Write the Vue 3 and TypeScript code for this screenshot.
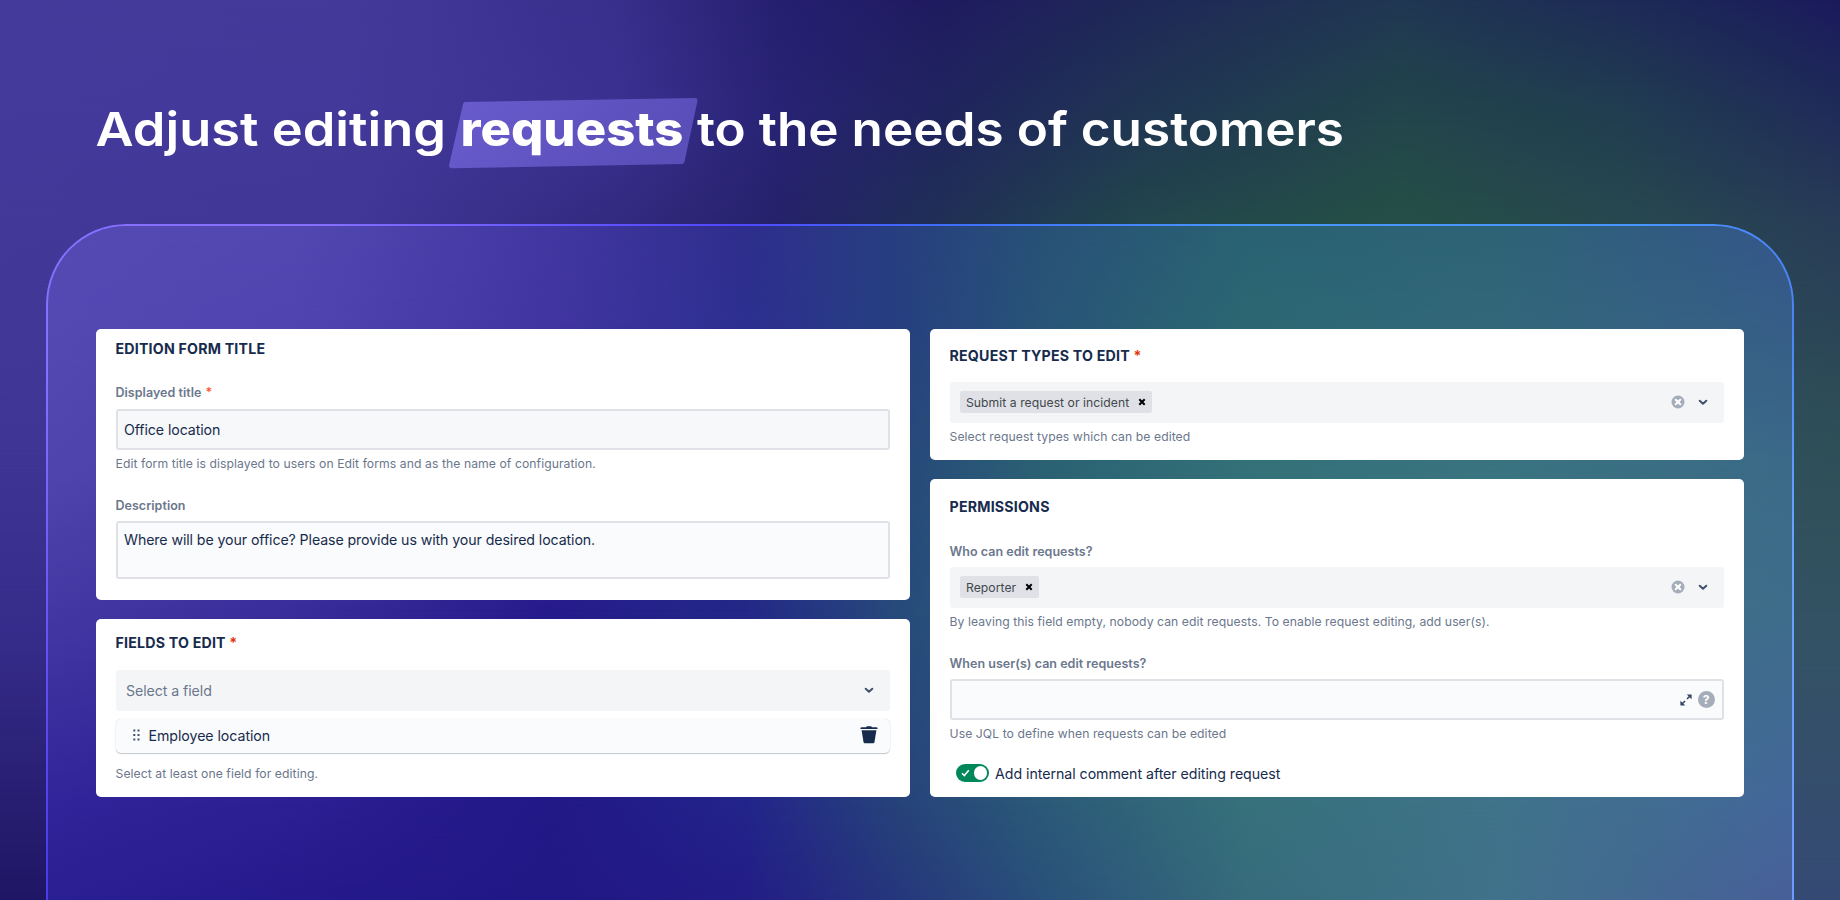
<template>
  <main class="promo">
    <div class="mesh mesh--page">
      <div v-for="(layer, i) in pageLayers" :key="i" class="mesh__layer" :style="layer"></div>
    </div>

    <h1 class="promo__title">
      <svg class="title-art" viewBox="0 0 1300 90" width="1300" height="90">
        <defs>
          <linearGradient id="marker" x1="0" y1="0" x2="1" y2="0.25">
            <stop offset="0" stop-color="#695bcd" />
            <stop offset="1" stop-color="#5a4eb9" />
          </linearGradient>
        </defs>
        <path class="title-art__marker" d="M369.500 11.500L599 7.500L586 68.500L355.500 72.700Z" />
        <text x="-0.500" y="53" textLength="350.500" lengthAdjust="spacingAndGlyphs">Adjust editing</text>
        <text class="title-art__strong" x="364.500" y="53" textLength="223" lengthAdjust="spacingAndGlyphs">requests</text>
        <text x="601" y="53" textLength="647" lengthAdjust="spacingAndGlyphs">to the needs of customers</text>
      </svg>
    </h1>

    <section class="stage">
      <div class="mesh mesh--stage">
        <div v-for="(layer, i) in stageLayers" :key="i" class="mesh__layer" :style="layer"></div>
      </div>
      <div class="stage__border"></div>

      <div class="columns">
        <div class="column">
          <article class="card card--title">
            <h2>EDITION FORM TITLE</h2>
            <label class="label label--title">Displayed title <span class="star">*</span></label>
            <div class="input">{{ title }}</div>
            <p class="help help--title">Edit form title is displayed to users on Edit forms and as the name of configuration.</p>
            <label class="label label--desc">Description</label>
            <div class="input input--area">{{ description }}</div>
          </article>

          <article class="card card--fields">
            <h2>FIELDS TO EDIT <span class="star">*</span></h2>
            <div class="select">
              <span class="select__placeholder">Select a field</span>
              <svg class="chevron" viewBox="0 0 10 7" width="10" height="7"><path d="M1.700 1.700L5 4.800L8.300 1.700" /></svg>
            </div>
            <div class="field-row">
              <svg class="grip" viewBox="0 0 7 12" width="7" height="12">
                <template v-for="y in [0.500, 5, 9.500]" :key="y">
                  <rect x="0.300" :y="y" width="2" height="2" />
                  <rect x="4.500" :y="y" width="2" height="2" />
                </template>
              </svg>
              <span class="field-row__name">Employee location</span>
              <svg class="trash" viewBox="0 0 18 18" width="18" height="18">
                <path d="M6.200 1.300Q6.300 0.300 7.300 0.300H10.700Q11.700 0.300 11.800 1.300H16.400Q17.500 1.300 17.500 2.200V3.100H0.500V2.200Q0.500 1.300 1.600 1.300Z" />
                <path d="M1.600 4.300H16.400L14.500 16.100Q14.300 17.300 13.200 17.300H4.800Q3.700 17.300 3.500 16.100Z" />
              </svg>
            </div>
            <p class="help help--fields">Select at least one field for editing.</p>
          </article>
        </div>

        <div class="column">
          <article class="card card--types">
            <h2>REQUEST TYPES TO EDIT <span class="star">*</span></h2>
            <div class="select">
              <span class="chip">
                <span class="chip__text">Submit a request or incident</span>
                <svg class="chip__x" viewBox="0 0 8 8" width="8" height="8"><path d="M1.300 1.300L6.700 6.700M6.700 1.300L1.300 6.700" /></svg>
              </span>
              <svg class="clear" viewBox="0 0 14 14" width="14" height="14"><circle cx="7" cy="7" r="6.500" /><path d="M4.700 4.700L9.300 9.300M9.300 4.700L4.700 9.300" /></svg>
              <svg class="chevron" viewBox="0 0 10 7" width="10" height="7"><path d="M1.700 1.700L5 4.800L8.300 1.700" /></svg>
            </div>
            <p class="help help--types">Select request types which can be edited</p>
          </article>

          <article class="card card--permissions">
            <h2>PERMISSIONS</h2>
            <label class="label label--who">Who can edit requests?</label>
            <div class="select">
              <span class="chip">
                <span class="chip__text">Reporter</span>
                <svg class="chip__x" viewBox="0 0 8 8" width="8" height="8"><path d="M1.300 1.300L6.700 6.700M6.700 1.300L1.300 6.700" /></svg>
              </span>
              <svg class="clear" viewBox="0 0 14 14" width="14" height="14"><circle cx="7" cy="7" r="6.500" /><path d="M4.700 4.700L9.300 9.300M9.300 4.700L4.700 9.300" /></svg>
              <svg class="chevron" viewBox="0 0 10 7" width="10" height="7"><path d="M1.700 1.700L5 4.800L8.300 1.700" /></svg>
            </div>
            <p class="help help--who">By leaving this field empty, nobody can edit requests. To enable request editing, add user(s).</p>
            <label class="label label--when">When user(s) can edit requests?</label>
            <div class="input input--jql">
              <svg class="expand" viewBox="0 0 12 12" width="12" height="12">
                <path class="expand__line" d="M7 5L10 2M5 7L2 10" />
                <path d="M6.800 0.400H11.600V5.200ZM0.400 6.800V11.600H5.200Z" />
              </svg>
              <span class="question">?</span>
            </div>
            <p class="help help--jql">Use JQL to define when requests can be edited</p>
            <div class="switch" v-on:click="toggleComment">
              <span :class="getSwitchClass()">
                <svg viewBox="0 0 9 8" width="9" height="8"><path d="M1 4.200L3.300 6.500L7.800 1.300" /></svg>
                <span class="switch__knob"></span>
              </span>
              <span class="switch__text">Add internal comment after editing request</span>
            </div>
          </article>
        </div>
      </div>
    </section>
  </main>
</template>

<script setup lang="ts">
import { ref } from 'vue'

interface MeshRow {
  y: number;
  colors: string[];
}

const title : string = 'Office location';
const description : string = 'Where will be your office? Please provide us with your desired location.';
const internalComment = ref<boolean>(true);

const pageStops : number[] = [0, 350, 620, 780, 940, 1140, 1400, 1620, 1840];
const pageRows : MeshRow[] = [
  { y: 0, colors: ['#443b9c', '#443a9a', '#382f8b', '#252070', '#1f1b60', '#1f2857', '#203752', '#1d2b57', '#1b1a5c'] },
  { y: 110, colors: ['#443a9c', '#43399a', '#3a3190', '#282374', '#20245e', '#203553', '#22454b', '#213d50', '#1f2b59'] },
  { y: 220, colors: ['#433999', '#413796', '#322a80', '#25226a', '#202f56', '#22464c', '#254f47', '#27484f', '#283c57'] },
  { y: 450, colors: ['#3f3594', '#3f3594', '#312a7e', '#251f69', '#1f2e56', '#21434f', '#254f47', '#2e505c', '#2f5058'] },
  { y: 650, colors: ['#352b88', '#352b88', '#312a7e', '#251f69', '#1f2e56', '#21434f', '#254f47', '#345265', '#345265'] },
  { y: 900, colors: ['#1f1664', '#1f1664', '#211788', '#211788', '#264080', '#366e7a', '#366e7a', '#354a74', '#354a74'] },
];

const stageStops : number[] = [0, 250, 500, 700, 850, 1000, 1200, 1450, 1748];
const stageRows : MeshRow[] = [
  { y: 0, colors: ['#554ab3', '#5248b1', '#4238a2', '#2f2e8d', '#273f80', '#285177', '#2a6273', '#2e6376', '#35568b'] },
  { y: 100, colors: ['#5449b2', '#5045b0', '#4136a1', '#2d2f90', '#263f80', '#285577', '#2c6772', '#32677a', '#375d88'] },
  { y: 245, colors: ['#4f45ad', '#473ca8', '#302696', '#272f88', '#27487b', '#2b6273', '#347178', '#3a7480', '#3b6a88'] },
  { y: 385, colors: ['#4439a3', '#392d9a', '#261b8c', '#232887', '#274a7b', '#2d6376', '#36737a', '#3e7581', '#3e6d8b'] },
  { y: 580, colors: ['#31249a', '#2b1f93', '#221887', '#23248a', '#26427a', '#2b5a78', '#37717b', '#3f738a', '#44679a'] },
  { y: 676, colors: ['#2a1f92', '#251a8c', '#211785', '#231d86', '#26367c', '#29517a', '#366b7b', '#40728a', '#475f98'] },
];

// Each row is a horizontal gradient which fades in over the row above it
const buildLayers = (rows : MeshRow[], stops : number[]) : Record<string, string>[] => {
  return rows.map((row, i) => {
    const colors = row.colors.map((color, j) => `${color} ${stops[j]}px`).join(', ');
    const output : Record<string, string> = {
      backgroundImage: `linear-gradient(90deg, ${colors})`
    };

    if (i > 0) {
      output.maskImage = `linear-gradient(180deg, transparent ${rows[i - 1].y}px, #000 ${row.y}px)`;
    }

    return output;
  });
};

const pageLayers = buildLayers(pageRows, pageStops);
const stageLayers = buildLayers(stageRows, stageStops);

const toggleComment = () : void => {
  internalComment.value = !internalComment.value;
};

const getSwitchClass = () : string => {
  const tmp = 'switch__track';

  return (internalComment.value)
    ? `${tmp} ${tmp}--on`
    : tmp;
};
</script>

<style>
body {
  overflow: hidden;
}
</style>

<style scoped>
.promo {
  box-sizing: border-box;
  color: #172b4d;
  display: flex;
  flex-direction: column;
  font-family: Inter, "Liberation Sans", sans-serif;
  height: 900px;
  overflow: hidden;
  padding: 93px 46px 0;
  position: relative;
  width: 1840px;
}
.mesh {
  inset: 0;
  overflow: hidden;
  position: absolute;
}
.mesh__layer {
  inset: 0;
  position: absolute;
}
.mesh--stage {
  border-radius: 80px 80px 0 0;
}
.promo__title {
  height: 131px;
  margin: 0 0 0 50px;
  position: relative;
}
.title-art {
  display: block;
  fill: #fff;
  font-family: Inter, sans-serif;
  font-size: 47px;
  font-weight: 600;
  overflow: visible;
}
.title-art__strong {
  font-weight: 800;
}
.title-art__marker {
  fill: url(#marker);
  stroke: url(#marker);
  stroke-linejoin: round;
  stroke-width: 5px;
}
.stage {
  box-sizing: border-box;
  flex: 1;
  padding: 105px 50px 0;
  position: relative;
}
/* gradient ring: only the border box is left visible */
.stage__border {
  background:
    linear-gradient(180deg, transparent 150px, #4a3ce8 640px) 0 0 / 4px 100% no-repeat,
    linear-gradient(180deg, transparent 100px, #66a3ff 300px, #6b9cff) 100% 0 / 4px 100% no-repeat,
    linear-gradient(90deg, #8570ff 0, #8570ff 260px, #5148fc 680px, #3f6bff 880px, #4896ff 1200px, #4896ff 1600px, #4a84f5 1748px);
  background-origin: border-box;
  border: 2px solid transparent;
  border-bottom: 0;
  border-radius: 80px 80px 0 0;
  inset: 0;
  mask: linear-gradient(#000 0 0) padding-box exclude, linear-gradient(#000 0 0) border-box;
  position: absolute;
}
.columns {
  column-gap: 20px;
  display: grid;
  grid-template-columns: 1fr 1fr;
  position: relative;
}
.column {
  display: flex;
  flex-direction: column;
  row-gap: 19px;
}
.card {
  background: #fff;
  border-radius: 5px;
  box-sizing: border-box;
  display: flex;
  flex-direction: column;
  padding: 0 20px 0 19.500px;
}
.card--title {
  height: 271.400px;
  padding-top: 10.400px;
}
.card--fields {
  height: 177.600px;
  padding-top: 13.400px;
}
.card--types {
  height: 131.400px;
  padding-top: 16.700px;
}
.card--permissions {
  height: 317.600px;
  padding-top: 18px;
}
.card h2 {
  font-size: 14.200px;
  font-weight: 700;
  letter-spacing: 0.200px;
  line-height: 20px;
  margin: 0;
  white-space: nowrap;
}
.star {
  color: #de350b;
}
.label {
  color: #6b778c;
  font-size: 12.500px;
  font-weight: 600;
  letter-spacing: 0.030px;
  line-height: 16px;
  white-space: nowrap;
}
.label .star {
  color: #ff5630;
  margin-left: 1px;
}
.label--title {
  margin: 25.900px 0 7.700px;
}
.label--desc {
  margin: 25.400px 0 7px;
}
.label--who {
  margin: 26.600px 0 6.900px;
}
.label--when {
  margin: 25.300px 0 7.600px;
}
.help {
  color: #6b778c;
  font-size: 12.200px;
  letter-spacing: 0.065px;
  line-height: 16px;
  margin: 6.500px 0 0;
  white-space: nowrap;
}
.help--fields {
  margin-top: 13px;
}
.help--jql {
  margin-top: 6px;
}
.input {
  background: #f7f8fa;
  border: 2px solid #dfe1e6;
  border-radius: 3px;
  box-sizing: border-box;
  flex: none;
  font-size: 14.200px;
  height: 41px;
  letter-spacing: -0.100px;
  line-height: 37px;
  padding: 0 6.500px;
  white-space: nowrap;
}
.input--area {
  background: #fafbfc;
  height: 58px;
  line-height: 34px;
}
.input--jql {
  align-items: center;
  background: #fafbfc;
  column-gap: 6px;
  display: flex;
  justify-content: flex-end;
  padding-right: 7.500px;
}
.select {
  align-items: center;
  background: #f4f5f7;
  border-radius: 3px;
  box-sizing: border-box;
  display: flex;
  flex: none;
  height: 41px;
  padding: 0 16px 0 10.500px;
}
.card--fields .select {
  margin-top: 17.300px;
}
.card--types .select {
  margin-top: 16.300px;
}
.select__placeholder {
  color: #6b778c;
  font-size: 14.200px;
  letter-spacing: -0.080px;
}
.chevron {
  fill: none;
  margin-left: auto;
  stroke: #42526e;
  stroke-linecap: round;
  stroke-linejoin: round;
  stroke-width: 2px;
}
.clear {
  fill: #a5adba;
  margin-left: auto;
}
.clear path {
  stroke: #fff;
  stroke-linecap: round;
  stroke-width: 2px;
}
.clear + .chevron {
  margin-left: 13px;
}
.chip {
  align-items: center;
  background: #dfe1e6;
  border-radius: 2px;
  box-sizing: border-box;
  column-gap: 9px;
  display: flex;
  height: 22px;
  padding: 0 6px;
}
.chip__text {
  color: #42474d;
  font-size: 12.200px;
  letter-spacing: 0.040px;
  white-space: nowrap;
}
.chip__x {
  stroke: #000;
  stroke-width: 2px;
}
.field-row {
  align-items: center;
  background: #fafbfc;
  border-radius: 5px;
  box-shadow: 0 1px 1px #c3c6cc, 0 0 1px #c3c6cc;
  box-sizing: border-box;
  display: flex;
  flex: none;
  font-size: 14.200px;
  height: 34px;
  letter-spacing: -0.060px;
  margin-top: 8px;
  padding: 0 12px 2px 17.500px;
}
.grip {
  fill: #42526e;
  margin-right: 8.500px;
}
.trash {
  fill: #172b4d;
  margin: -1px 0 0 auto;
}
.expand {
  fill: #344563;
}
.expand__line {
  stroke: #344563;
  stroke-width: 1.500px;
}
.question {
  background: #a5adba;
  border-radius: 50%;
  color: #fff;
  font-size: 12px;
  font-weight: 700;
  height: 17px;
  line-height: 17px;
  text-align: center;
  width: 17px;
}
.switch {
  align-items: center;
  column-gap: 6px;
  cursor: pointer;
  display: flex;
  font-size: 14.200px;
  letter-spacing: -0.040px;
  margin: 22.200px 0 0 6.500px;
  white-space: nowrap;
}
.switch__track {
  align-items: center;
  background: #6b778c;
  border-radius: 9px;
  box-sizing: border-box;
  display: flex;
  height: 17.500px;
  justify-content: space-between;
  padding: 0 2px 0 5px;
  width: 33px;
}
.switch__track--on {
  background: #00875a;
}
.switch__track svg {
  fill: none;
  stroke: #fff;
  stroke-width: 1.600px;
}
.switch__knob {
  background: #fff;
  border-radius: 50%;
  height: 13.500px;
  width: 13.500px;
}
</style>
